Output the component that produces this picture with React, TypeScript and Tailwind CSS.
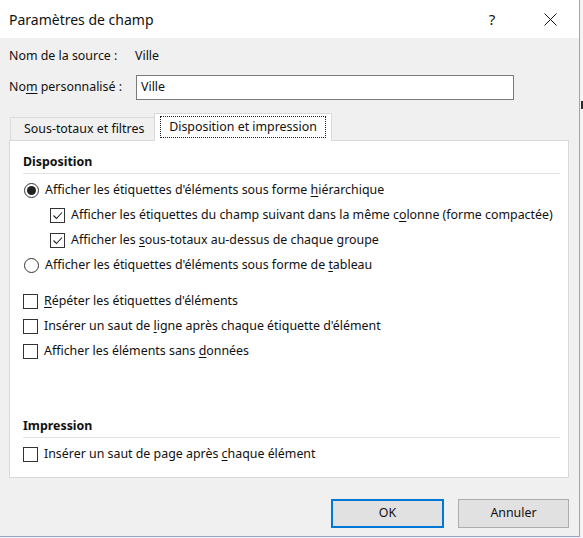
import type { ReactNode } from "react";

function Radio({ checked }: { checked?: boolean }) {
  return (
    <span className="flex h-[15px] w-[15px] shrink-0 items-center justify-center rounded-full border border-[#333] bg-white">
      {checked && <span className="h-[9px] w-[9px] rounded-full bg-[#222]" />}
    </span>
  );
}

function Checkbox({ checked }: { checked?: boolean }) {
  return (
    <span className="flex h-[15px] w-[15px] shrink-0 items-center justify-center border border-[#333] bg-white">
      {checked && (
        <svg width="13" height="13" viewBox="0 0 13 13">
          <polyline points="2.5,6.5 5.5,9.5 11,3.5" fill="none" stroke="#222" strokeWidth="1.1" />
        </svg>
      )}
    </span>
  );
}

function Row({ control, indent, children }: { control: ReactNode; indent?: boolean; children: ReactNode }) {
  return (
    <div className={`flex h-[25px] items-center gap-[6px] ${indent ? "pl-[27px]" : ""}`}>
      {control}
      <span className="whitespace-nowrap">{children}</span>
    </div>
  );
}

function Section({ title }: { title: string }) {
  return (
    <div className="flex h-[22px] items-center border-b border-[#e3e3e3] font-bold">{title}</div>
  );
}

export default function App() {
  return (
    <div className="flex h-[538px] w-[583px] bg-[#f4f4f4] font-['Noto_Sans',sans-serif] text-[12.4px] text-[#111]">
      <div className="flex h-[537px] w-[580px] shrink-0 flex-col border-r border-b border-[#95a5cb] bg-[#f0f0f0]">
        {/* title bar */}
        <div className="flex h-[38px] items-center bg-white">
          <span className="flex-1 pl-[9px] text-[14px]">Paramètres de champ</span>
          <span className="w-[46px] text-center text-[15px]">?</span>
          <span className="ml-[12px] mr-[6px] flex w-[46px] justify-center">
            <svg width="13" height="13" viewBox="0 0 13 13">
              <path d="M0.5 0.5L12.5 12.5M12.5 0.5L0.5 12.5" stroke="#111" strokeWidth="1" />
            </svg>
          </span>
        </div>

        <div className="flex flex-1 flex-col pl-[9px]">
          <div className="mt-[8px] flex h-[20px] items-center">
            <span className="w-[126px]">Nom de la source :</span>
            <span>Ville</span>
          </div>
          <div className="mt-[9px] flex h-[25px] items-center">
            <span className="w-[127px]">
              No<u className="underline-offset-2">m</u> personnalisé :
            </span>
            <div className="flex h-[25px] w-[378px] items-center border border-[#7a7a7a] bg-white pl-[4px]">Ville</div>
          </div>

          {/* tabs */}
          <div className="mt-[13px] flex items-end pl-[1px]">
            <div className="flex h-[23px] w-[144px] items-center border-t border-l border-[#dadada] pl-[13px]">
              Sous-totaux et filtres
            </div>
            <div className="relative z-10 -mb-px flex h-[28px] w-[178px] items-start justify-center border border-b-0 border-[#d9d9d9] bg-white pt-[2px]">
              <div className="flex h-[22px] w-[166px] items-center justify-center border border-dotted border-[#222]">
                Disposition et impression
              </div>
            </div>
          </div>

          <div className="flex h-[338px] w-[560px] flex-col border border-[#d9d9d9] bg-white pl-[13px] pr-[8px] pb-[10px]">
            <div className="mt-[11px]">
              <Section title="Disposition" />
            </div>
            <div className="mt-[4px] pl-[1px]">
              <Row control={<Radio checked />}>
                Afficher les étiquettes d'éléments sous forme <u className="underline-offset-2">h</u>iérarchique
              </Row>
            </div>
            <Row indent control={<Checkbox checked />}>
              Afficher les étiquettes du champ suivant dans la même c<u className="underline-offset-2">o</u>lonne (forme compactée)
            </Row>
            <Row indent control={<Checkbox checked />}>
              Afficher les <u className="underline-offset-2">s</u>ous-totaux au-dessus de chaque groupe
            </Row>
            <div className="pl-[1px]">
              <Row control={<Radio />}>
                Afficher les étiquettes d'éléments sous forme de <u className="underline-offset-2">t</u>ableau
              </Row>
            </div>

            <div className="mt-[11px]">
              <Row control={<Checkbox />}>
                <u className="underline-offset-2">R</u>épéter les étiquettes d'éléments
              </Row>
              <Row control={<Checkbox />}>
                Insérer un saut de <u className="underline-offset-2">l</u>igne après chaque étiquette d'élément
              </Row>
              <Row control={<Checkbox />}>
                Afficher les éléments sans <u className="underline-offset-2">d</u>onnées
              </Row>
            </div>

            <div className="mt-auto">
              <Section title="Impression" />
              <div className="mt-[4px]">
                <Row control={<Checkbox />}>
                  Insérer un saut de page après <u className="underline-offset-2">c</u>haque élément
                </Row>
              </div>
            </div>
          </div>

          {/* dialog buttons */}
          <div className="mt-[21px] flex w-[560px] justify-end gap-[14px]">
            <button className="h-[29px] w-[113px] border-2 border-[#0078d7] bg-[#e1e1e1]">OK</button>
            <button className="h-[29px] w-[111px] border border-[#adadad] bg-[#e1e1e1]">Annuler</button>
          </div>
        </div>
      </div>
      <div className="flex flex-1 flex-col">
        <div className="mt-[101px] ml-[1px] h-[8px] bg-[#2d2d2d]" />
      </div>
    </div>
  );
}
